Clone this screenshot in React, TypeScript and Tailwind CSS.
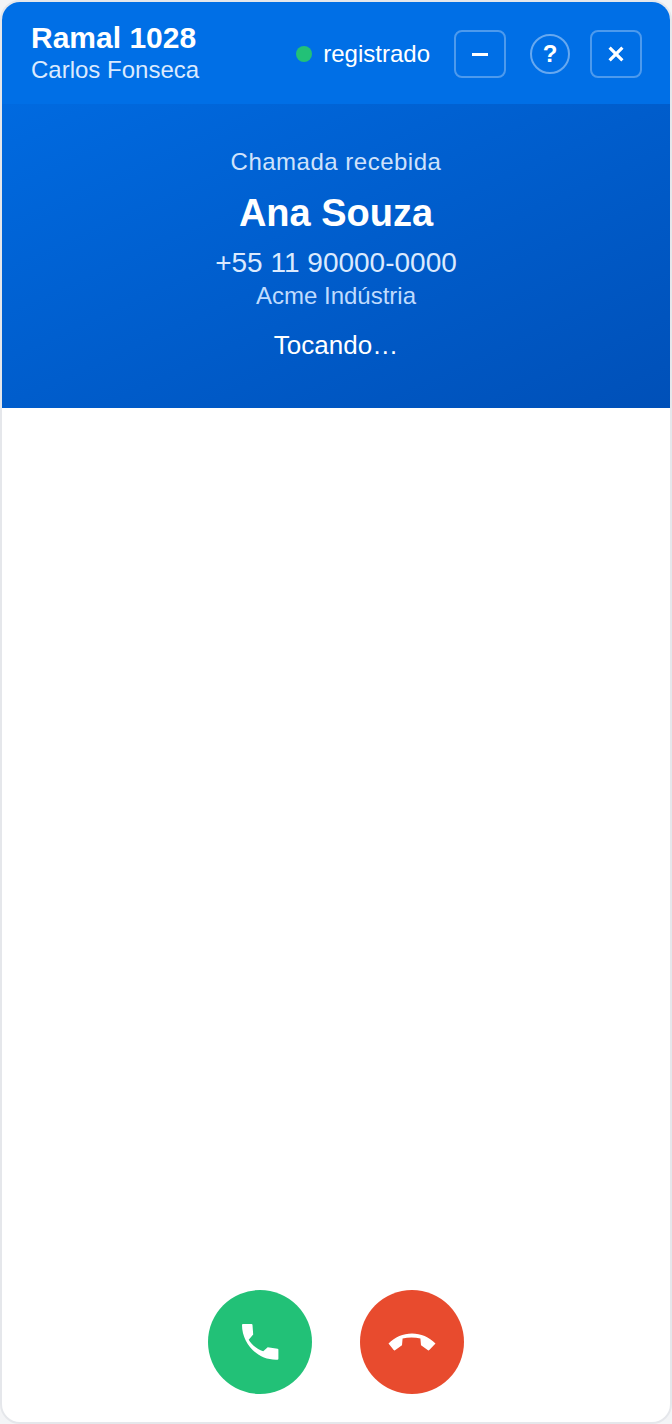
import React from "react";

export default function App() {
  return (
    <div className="w-[672px] h-[1424px] bg-[#f3f4f6] font-['Liberation_Sans',Arial,sans-serif]">
      <div className="w-full h-full flex flex-col bg-white border-2 border-[#e5e7eb] rounded-[20px] overflow-hidden">
        <header className="h-[102px] shrink-0 bg-[#006fe6] flex items-center justify-between pl-[29px] pr-[28px] pt-[2px] text-white">
          <div className="flex flex-col">
            <div className="text-[30px] leading-[32px] font-bold">Ramal 1028</div>
            <div className="text-[24px] leading-[32px] text-[#dbeafe]">Carlos Fonseca</div>
          </div>
          <div className="flex items-center">
            <span className="w-4 h-4 rounded-full bg-[#22c177]" />
            <span className="ml-[11px] text-[24px] leading-[28px]">registrado</span>
            <button className="ml-6 w-[52px] h-12 rounded-lg border-2 border-white/30 flex items-center justify-center">
              <span className="w-4 h-[3px] bg-white" />
            </button>
            <button className="ml-6 w-10 h-10 rounded-full border-2 border-white/40 flex items-center justify-center text-[24px] font-bold leading-none">?</button>
            <button className="ml-5 w-[52px] h-12 rounded-lg border-2 border-white/30 flex items-center justify-center">
              <svg width="16" height="16" viewBox="0 0 16 16" fill="none" stroke="white" strokeWidth="3.2">
                <path d="M1.6 1.6 14.4 14.4M14.4 1.6 1.6 14.4" />
              </svg>
            </button>
          </div>
        </header>
        <section className="h-[304px] shrink-0 bg-gradient-to-br from-[#006ae0] to-[#0050b8] flex flex-col items-center text-center pt-[42px]">
          <div className="text-[24px] leading-[32px] tracking-[0.5px] text-[#cfe2fb]">Chamada recebida</div>
          <div className="mt-[12px] text-[38px] leading-[46px] font-bold text-white">Ana Souza</div>
          <div className="mt-[11px] text-[28px] leading-[32px] text-[#dbeafe]">+55 11 90000-0000</div>
          <div className="mt-[1px] text-[24px] leading-[32px] text-[#bfdbfe]">Acme Indústria</div>
          <div className="mt-[17px] text-[26px] leading-[32px] text-white">Tocando…</div>
        </section>
        <div className="flex-1" />
        <footer className="shrink-0 flex justify-center gap-12 pb-[28px]">
          <button className="w-[104px] h-[104px] rounded-full bg-[#22c177] flex items-center justify-center">
            <svg width="38" height="38" viewBox="0 0 38 38" fill="white">
              <path d="M1 2a1 1 0 0 1 1-1h8.500a1 1 0 0 1 1 1l.7 9.500-4.500 5.200c2.500 4.500 7.500 9 14.500 11.500l4.500-4 9.800 1.600a1 1 0 0 1 .9 1v8.900a1 1 0 0 1-1 1C16 37.500 1 20 1 2z" />
            </svg>
          </button>
          <button className="w-[104px] h-[104px] rounded-full bg-[#e84b2e] flex items-center justify-center">
            <svg width="48" height="18" viewBox="0 0 48 18" fill="white">
              <path d="M.5 10.500C7 4 15 .5 24 .5s17 3.500 23.500 10l-6.200 6.500a1 1 0 0 1-1.300.2l-7-4.900-.6-6.800c-5.500-1.200-12.300-1.200-17.800 0l-.6 6.800-7 4.900a1 1 0 0 1-1.300-.2z" />
            </svg>
          </button>
        </footer>
      </div>
    </div>
  );
}
